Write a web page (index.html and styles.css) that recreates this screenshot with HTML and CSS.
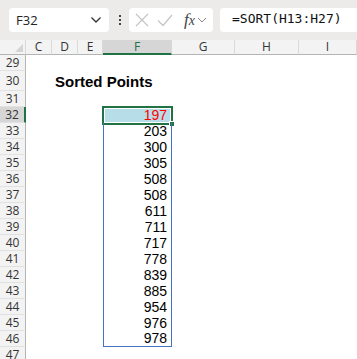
FILE: index.html
```html
<!DOCTYPE html>
<html lang="en">
<head>
    <meta charset="UTF-8">
    <title>Sorted Points</title>
    <link rel="stylesheet" href="styles.css">
</head>
<body>
    <div class="formula-bar">
        <div class="name-box">
            <span>F32</span>
            <svg class="chevron" width="12" height="8" viewBox="0 0 12 8"><path d="M1.5 1.5 L6 6 L10.5 1.5" fill="none" stroke="#333" stroke-width="1.3"/></svg>
        </div>
        <div class="grip"><i></i><i></i><i></i></div>
        <div class="fx-box">
            <svg width="16" height="16" viewBox="0 0 16 16"><path d="M2 2 L14 14 M14 2 L2 14" stroke="#c4c4c4" stroke-width="1.2"/></svg>
            <svg width="18" height="16" viewBox="0 0 18 16"><path d="M2 8.5 L7 13.5 L16 3" fill="none" stroke="#c4c4c4" stroke-width="1.2"/></svg>
            <span class="fx"><i>f</i><i>x</i></span>
            <svg class="fx-chevron" width="10" height="8" viewBox="0 0 10 8"><path d="M1 2 L5 6 L9 2" fill="none" stroke="#888" stroke-width="1"/></svg>
        </div>
        <div class="formula">=SORT(H13:H27)</div>
    </div>

    <div class="sheet">
        <div class="corner"><span></span></div>
        <div class="col-head">C</div>
        <div class="col-head">D</div>
        <div class="col-head">E</div>
        <div class="col-head active">F</div>
        <div class="col-head">G</div>
        <div class="col-head">H</div>
        <div class="col-head">I</div>

        <div class="row-head">29</div>
        <div class="cells"></div>

        <div class="row-head tall">30</div>
        <div class="cells tall"><span class="title">Sorted Points</span></div>

        <div class="row-head">31</div>
        <div class="cells"></div>
    </div>
    <div class="sheet" id="list"></div>

    <script>
        const points = [197, 203, 300, 305, 508, 508, 611, 711, 717, 778, 839, 885, 954, 976, 978];
        const list = document.getElementById('list');

        points.forEach((value, i) => {
            const row = 32 + i;
            const head = document.createElement('div');
            head.className = 'row-head' + (i === 0 ? ' active' : '');
            head.textContent = row;
            const cells = document.createElement('div');
            cells.className = 'cells data';
            const cell = document.createElement('div');
            cell.className = 'value' + (i === 0 ? ' first' : '') + (i === points.length - 1 ? ' last' : '');
            cell.textContent = value;
            if (i === 0) {
                const sel = document.createElement('div');
                sel.className = 'selection';
                cell.appendChild(sel);
            }
            cells.appendChild(cell);
            list.appendChild(head);
            list.appendChild(cells);
        });

        const tail = document.createElement('div');
        tail.className = 'row-head';
        tail.textContent = 47;
        list.appendChild(tail);
        list.appendChild(document.createElement('div'));
    </script>
</body>
</html>
```

FILE: styles.css
```css
*, *:before, *:after {
    box-sizing: border-box;
}

body {
    margin: 0;
    width: 357px;
    height: 359px;
    overflow: hidden;
    background: #fff;
    font-family: "Liberation Sans", Arial, sans-serif;
}

.formula-bar {
    display: flex;
    align-items: center;
    height: 40px;
    padding: 8px 0 8px 9px;
    background: #edebe9;
}

.name-box {
    display: flex;
    align-items: center;
    justify-content: space-between;
    width: 100px;
    height: 24px;
    padding: 0 7px 0 7px;
    background: #fff;
    border-radius: 4px;
    font-family: "Open Sans", sans-serif;
    font-size: 13px;
    color: #222;
}

.grip {
    display: flex;
    flex-direction: column;
    gap: 2px;
    margin: 0 8px 0 10px;
}

.grip i {
    width: 2px;
    height: 2px;
    background: #444;
}

.fx-box {
    display: flex;
    align-items: center;
    gap: 6px;
    width: 84px;
    height: 24px;
    padding: 0 4px 0 5px;
    background: #fff;
    border-radius: 4px;
}

.fx {
    font-family: "Liberation Serif", serif;
    font-size: 17px;
    color: #444;
    margin-left: 4px;
}

.fx i + i {
    font-size: 14px;
}

.fx-chevron {
    margin-left: -4px;
}

.formula {
    flex: 1;
    height: 24px;
    margin-left: 7px;
    padding: 3px 0 0 12px;
    background: #fff;
    border-radius: 4px 0 0 4px;
    font-family: "DejaVu Sans Mono", monospace;
    font-size: 13px;
    color: #111;
}

.sheet {
    display: grid;
    grid-template-columns: 26px 26px 26px 25px 69px 63px 64px 58px;
    background: #fff;
}

.corner {
    height: 15px;
    background: #f3f3f3;
    border-right: 1px solid #d9d9d9;
    border-bottom: 1px solid #b4b4b4;
    position: relative;
}

.corner span {
    position: absolute;
    right: 2px;
    bottom: 2px;
    border-left: 8px solid transparent;
    border-bottom: 8px solid #d4d4d4;
}

.col-head {
    height: 15px;
    background: #f3f3f3;
    border-right: 1px solid #d9d9d9;
    border-bottom: 1px solid #b4b4b4;
    font-family: "Open Sans", sans-serif;
    font-size: 12px;
    line-height: 14px;
    text-align: center;
    color: #333;
}

.col-head.active {
    background: #d6d6d6;
    border-bottom: 2px solid #217346;
    color: #217346;
}

.row-head {
    height: 16px;
    background: #f3f3f3;
    border-right: 1px solid #b4b4b4;
    border-bottom: 1px solid #e1e1e1;
    font-family: "Open Sans", sans-serif;
    font-size: 12px;
    line-height: 15px;
    text-align: center;
    color: #333;
}

.row-head.tall {
    height: 20px;
    line-height: 19px;
}

.row-head.active {
    background: #d6d6d6;
    border-right: 2px solid #217346;
}

.cells {
    grid-column: 2 / -1;
    display: grid;
    grid-template-columns: 77px 69px;
    height: 16px;
}

.cells.tall {
    height: 20px;
}

.title {
    grid-column: 1 / -1;
    padding: 2px 0 0 29px;
    font-size: 15px;
    font-weight: bold;
    color: #000;
}

.value {
    grid-column: 2;
    position: relative;
    padding-right: 4px;
    border-left: 1px solid #4472c4;
    border-right: 1px solid #4472c4;
    font-size: 14px;
    line-height: 16px;
    text-align: right;
    color: #000;
}

.value.first {
    border-top: 1px solid #4472c4;
    background: #b7dde8;
    color: #ff0000;
    line-height: 15px;
}

.value.last {
    border-bottom: 1px solid #4472c4;
    line-height: 15px;
}

.selection {
    position: absolute;
    left: -2px;
    top: -2px;
    right: -2px;
    bottom: -2px;
    border: 2px solid #217346;
    box-shadow: inset 0 0 0 1px #fff;
}

.selection:after {
    content: "";
    position: absolute;
    right: -4px;
    bottom: -4px;
    width: 6px;
    height: 6px;
    background: #217346;
    border: 1px solid #fff;
}
```
